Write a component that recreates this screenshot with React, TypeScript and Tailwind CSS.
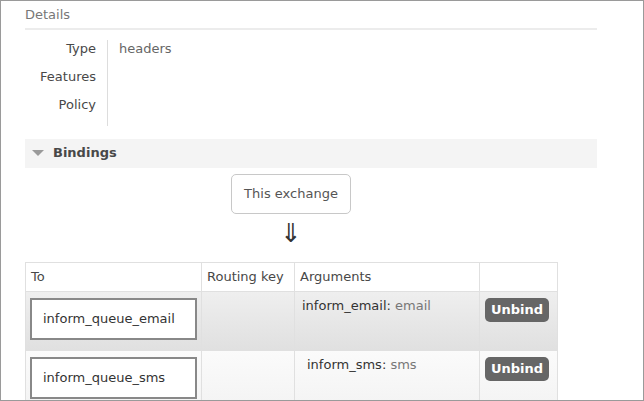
const bindings = [
  { queue: 'inform_queue_email', key: 'inform_email', value: 'email', shade: true },
  { queue: 'inform_queue_sms', key: 'inform_sms', value: 'sms', shade: false },
];

export default function App() {
  return (
    <div
      className="w-[644px] h-[401px] overflow-hidden bg-white border border-[#9a9a9a] text-[13px] text-[#484848]"
      style={{ fontFamily: '"DejaVu Sans", Verdana, sans-serif' }}
    >
      <div className="pl-[24px] pr-[46px]">
        {/* Details */}
        <div className="pt-[4px] pb-[3px] text-[#777] border-b-2 border-[#ececec]">Details</div>
        <div className="flex mt-[10px]">
          <div className="w-[82px] flex flex-col items-end gap-[11px] pr-[11px] leading-[17px]">
            <span>Type</span>
            <span>Features</span>
            <span>Policy</span>
          </div>
          <div className="w-px h-[86px] bg-[#ddd]" />
          <div className="pl-[11px] leading-[17px] text-[#666]">headers</div>
        </div>

        {/* Bindings */}
        <div className="mt-[13px] h-[29px] bg-[#f4f4f4] flex items-center pl-[7px] gap-[9px]">
          <svg width="12" height="8" viewBox="0 0 12 8">
            <path d="M0 1 L12 1 L6 7 Z" fill="#9a9a9a" />
          </svg>
          <span className="font-bold text-[#484848]">Bindings</span>
        </div>

        <div className="flex flex-col items-center w-[532px] mt-[6px]">
          <div className="h-[40px] px-[12px] flex items-center border border-[#c8c8c8] rounded-[5px] text-[#555]">
            This exchange
          </div>
          <div className="h-[48px] pt-[5px] text-[26px] leading-[28px] text-[#333]">⇓</div>
        </div>

        <table className="w-[533px] border-collapse text-left">
          <thead>
            <tr className="h-[29px]">
              <th className="w-[176px] font-normal border border-[#e0e0e0] px-[5px]">To</th>
              <th className="w-[93px] font-normal border border-[#e0e0e0] px-[5px]">Routing key</th>
              <th className="w-[185px] font-normal border border-[#e0e0e0] px-[5px]">Arguments</th>
              <th className="font-normal border border-[#e0e0e0]" />
            </tr>
          </thead>
          <tbody>
            {bindings.map((b) => (
              <tr
                key={b.queue}
                className={
                  'h-[59px] ' +
                  (b.shade
                    ? 'bg-gradient-to-b from-[#efefef] to-[#e0e0e0]'
                    : 'bg-gradient-to-b from-[#fbfbfb] to-[#f3f3f3]')
                }
              >
                <td className="border border-[#e0e0e0] px-[4px] py-[6px] align-top">
                  <div className="h-[42px] border-2 border-[#888] bg-white flex items-center pl-[11px] text-[#333]">
                    {b.queue}
                  </div>
                </td>
                <td className="border border-[#e0e0e0]" />
                <td className={'border border-[#e0e0e0] align-top pt-[4px] ' + (b.shade ? 'pl-[7px]' : 'pl-[12px]')}>
                  <span className="text-[#333]">{b.key}:</span> <span className="text-[#777]">{b.value}</span>
                </td>
                <td className="border border-[#e0e0e0] align-top pt-[6px] pl-[5px]">
                  <span className="inline-block h-[24px] leading-[24px] px-[6px] rounded-[5px] bg-[#666] text-white font-bold text-[13px]">
                    Unbind
                  </span>
                </td>
              </tr>
            ))}
          </tbody>
        </table>
      </div>
    </div>
  );
}
